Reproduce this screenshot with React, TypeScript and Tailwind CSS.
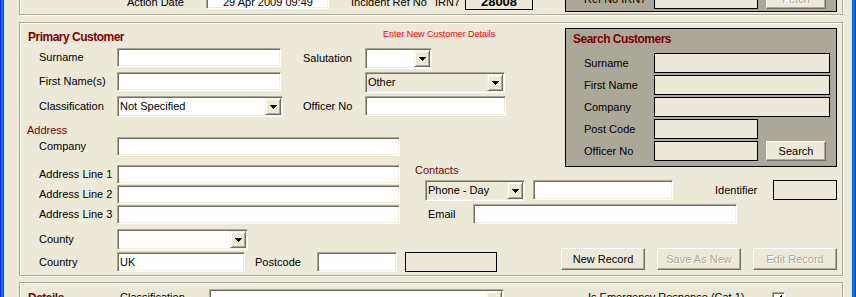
import React from "react";

const sunken =
  "border border-t-[#ACA899] border-l-[#ACA899] border-b-white border-r-white shadow-[inset_1px_1px_0_#716F64,inset_-1px_-1px_0_#F1EFE2]";
const raisedSmall =
  "border border-t-[#F1EFE2] border-l-[#F1EFE2] border-b-[#716F64] border-r-[#716F64] shadow-[inset_1px_1px_0_#fff,inset_-1px_-1px_0_#ACA899]";
const raisedBtn =
  "border border-t-white border-l-white border-b-[#716F64] border-r-[#716F64] shadow-[inset_-1px_-1px_0_#ACA899]";
const etched = "border border-[#ACA899] shadow-[inset_1px_1px_0_#fff,1px_1px_0_#fff]";
const disabledText = "text-[#ACA899] [text-shadow:1px_1px_0_#fff]";
const titleText = "font-bold text-[12px] leading-[14px] tracking-[-0.5px] text-[#800000]";

function Lbl({ className = "", children }: { className?: string; children?: React.ReactNode }) {
  return <div className={`flex items-center shrink-0 whitespace-nowrap ${className}`}>{children}</div>;
}

function TextBox({ className = "", children }: { className?: string; children?: React.ReactNode }) {
  return (
    <div className={`shrink-0 flex items-center pl-[2px] whitespace-nowrap bg-white ${sunken} ${className}`}>
      {children}
    </div>
  );
}

function Arrow() {
  return (
    <svg width="7" height="4" viewBox="0 0 7 4" shapeRendering="crispEdges">
      <path d="M0 0h7v1H0zM1 1h5v1H1zM2 2h3v1H2zM3 3h1v1H3z" fill="#000" />
    </svg>
  );
}

function Combo({ className = "", value, beige }: { className?: string; value?: string; beige?: boolean }) {
  return (
    <div className={`shrink-0 flex ${beige ? "bg-[#ECE9D8]" : "bg-white"} ${sunken} ${className}`}>
      <div className="flex-1 flex items-center pl-[2px] whitespace-nowrap overflow-hidden">{value}</div>
      <div className={`w-[16px] my-[1px] mr-[1px] flex items-center justify-center bg-[#ECE9D8] ${raisedSmall}`}>
        <Arrow />
      </div>
    </div>
  );
}

function Button({ className = "", children, disabled }: { className?: string; children: React.ReactNode; disabled?: boolean }) {
  return (
    <div
      className={`shrink-0 flex items-center justify-center bg-[#ECE9D8] whitespace-nowrap ${raisedBtn} ${
        disabled ? disabledText : "text-black"
      } ${className}`}
    >
      {children}
    </div>
  );
}

function BlackBox({ className = "" }: { className?: string }) {
  return <div className={`shrink-0 bg-[#ECE9D8] border border-black ${className}`} />;
}

function SearchRow({ label, wide, children }: { label: string; wide?: boolean; children?: React.ReactNode }) {
  return (
    <div className="flex items-start">
      <Lbl className="w-[88px] pl-[18px] h-[20px]">{label}</Lbl>
      {wide ? <BlackBox className="w-[176px] h-[20px]" /> : <BlackBox className="w-[104px] h-[20px]" />}
      {children}
    </div>
  );
}

export default function App() {
  return (
    <div className="w-[856px] h-[297px] overflow-hidden flex bg-[#ECE9D8] text-black text-[11px] leading-[13px] font-['Liberation_Sans',Arial,sans-serif]">
      <div className="w-[4px] shrink-0 bg-[linear-gradient(90deg,#0831d9_0%,#0831d9_25%,#166aee_25%,#166aee_75%,#0855dd_75%)]" />

      <div className="w-[848px] shrink-0 flex flex-col">
        {/* Top (partially visible) frame */}
        <div className={`ml-[15px] w-[824px] h-[45px] -mt-[30px] shrink-0 flex items-end ${etched}`}>
          <Lbl className="ml-[107px] w-[79px] mb-[5px]">Action Date</Lbl>
          <div className={`shrink-0 w-[123px] h-[20px] mb-[5px] bg-white pl-[16px] pt-[6px] whitespace-nowrap ${sunken}`}>
            29 Apr 2009 09:49
          </div>
          <Lbl className="w-[106px] pl-[22px] mb-[5px]">Incident Ref No</Lbl>
          <Lbl className="w-[30px] mb-[5px]">IRN7</Lbl>
          <div className="shrink-0 w-[68px] h-[22px] mb-[4px] border border-black flex items-end justify-center pb-[1px] font-bold text-[13px] leading-[13px]">
            28008
          </div>
          <div className="shrink-0 ml-[32px] w-[272px] h-[30px] mb-[2px] bg-[#ACA899] border border-black flex items-end pb-[2px]">
            <Lbl className="w-[88px] pl-[18px] mb-[3px]">Ref No IRN7</Lbl>
            <BlackBox className="w-[104px] h-[20px]" />
            <Button disabled className="ml-[8px] w-[60px] h-[20px]">
              Fetch
            </Button>
          </div>
        </div>

        {/* Primary Customer frame */}
        <div className={`mt-[7px] ml-[15px] w-[824px] h-[254px] shrink-0 flex flex-col ${etched}`}>
          {/* Band A */}
          <div className="flex items-start">
            <div className="w-[545px] shrink-0 flex flex-col">
              <div className="flex items-start mt-[6px] pl-[8px]">
                <div className={`w-[355px] shrink-0 mt-[1px] ${titleText}`}>Primary Customer</div>
                <div className="text-[9px] leading-[11px] tracking-[-0.05px] text-[#FF0000] whitespace-nowrap">
                  Enter New Customer Details
                </div>
              </div>
              <div className="flex items-start mt-[4px]">
                <Lbl className="w-[97px] pl-[19px] h-[19px]">Surname</Lbl>
                <TextBox className="w-[164px] h-[19px]" />
                <Lbl className="w-[84px] pl-[22px] h-[21px]">Salutation</Lbl>
                <Combo className="w-[67px] h-[21px]" />
              </div>
              <div className="flex items-start mt-[3px]">
                <Lbl className="w-[97px] pl-[19px] h-[19px]">First Name(s)</Lbl>
                <TextBox className="w-[164px] h-[19px]" />
                <div className="w-[84px] shrink-0" />
                <Combo beige className="w-[140px] h-[21px]" value="Other" />
              </div>
              <div className="flex items-start mt-[3px]">
                <Lbl className="w-[97px] pl-[19px] h-[21px]">Classification</Lbl>
                <Combo className="w-[166px] h-[21px]" value="Not Specified" />
                <Lbl className="w-[82px] pl-[20px] h-[20px]">Officer No</Lbl>
                <TextBox className="w-[141px] h-[20px]" />
              </div>
              <div className="mt-[7px] pl-[7px] text-[#800000]">Address</div>
              <div className="flex items-start">
                <Lbl className="w-[97px] pl-[19px] h-[19px]">Company</Lbl>
                <TextBox className="w-[283px] h-[19px]" />
              </div>
            </div>

            {/* Search Customers */}
            <div className="mt-[5px] -mb-[11px] w-[272px] h-[139px] shrink-0 bg-[#ACA899] border border-black flex flex-col gap-[2px]">
              <div className={`mt-[3px] mb-[5px] pl-[7px] ${titleText}`}>Search Customers</div>
              <SearchRow label="Surname" wide />
              <SearchRow label="First Name" wide />
              <SearchRow label="Company" wide />
              <SearchRow label="Post Code" />
              <SearchRow label="Officer No">
                <Button className="ml-[8px] w-[60px] h-[20px]">Search</Button>
              </SearchRow>
            </div>
          </div>

          {/* Band B */}
          <div className="flex items-start">
            <div className="w-[380px] shrink-0 flex flex-col mt-[9px] gap-[1px]">
              <div className="flex items-start">
                <Lbl className="w-[97px] pl-[19px] h-[19px]">Address Line 1</Lbl>
                <TextBox className="w-[283px] h-[19px]" />
              </div>
              <div className="flex items-start">
                <Lbl className="w-[97px] pl-[19px] h-[19px]">Address Line 2</Lbl>
                <TextBox className="w-[283px] h-[19px]" />
              </div>
              <div className="flex items-start">
                <Lbl className="w-[97px] pl-[19px] h-[19px]">Address Line 3</Lbl>
                <TextBox className="w-[283px] h-[19px]" />
              </div>
            </div>
            <div className="ml-[15px] flex flex-col">
              <div className="mt-[8px] text-[#800000]">Contacts</div>
              <div className="flex items-start mt-[3px] ml-[10px]">
                <Combo beige className="w-[100px] h-[21px]" value="Phone - Day" />
                <TextBox className="ml-[8px] w-[140px] h-[20px]" />
                <Lbl className="ml-[42px] w-[58px] h-[20px]">Identifier</Lbl>
                <BlackBox className="w-[64px] h-[20px]" />
              </div>
              <div className="flex items-start mt-[3px] ml-[13px]">
                <Lbl className="w-[45px] h-[20px]">Email</Lbl>
                <TextBox className="w-[264px] h-[20px]" />
              </div>
            </div>
          </div>

          {/* Band C */}
          <div className="flex items-start">
            <div className="flex flex-col shrink-0">
              <div className="flex items-start mt-[5px]">
                <Lbl className="w-[97px] pl-[19px] h-[21px]">County</Lbl>
                <Combo className="w-[131px] h-[21px]" />
              </div>
              <div className="flex items-start mt-[2px]">
                <Lbl className="w-[97px] pl-[19px] h-[20px]">Country</Lbl>
                <TextBox className="w-[128px] h-[20px]">UK</TextBox>
                <Lbl className="w-[72px] pl-[10px] h-[20px]">Postcode</Lbl>
                <TextBox className="w-[80px] h-[20px]" />
                <BlackBox className="ml-[8px] w-[92px] h-[20px]" />
              </div>
            </div>
            <div className="flex ml-[64px] mt-[24px] gap-[12px]">
              <Button className="w-[84px] h-[22px]">New Record</Button>
              <Button disabled className="w-[84px] h-[22px]">
                Save As New
              </Button>
              <Button disabled className="w-[84px] h-[22px]">
                Edit Record
              </Button>
            </div>
          </div>
        </div>

        {/* Details frame (partially visible) */}
        <div className={`mt-[6px] ml-[15px] w-[824px] h-[40px] shrink-0 flex flex-col ${etched}`}>
          <div className="flex items-start mt-[6px] pl-[8px]">
            <div className={`w-[92px] shrink-0 mt-[2px] ${titleText}`}>Details</div>
            <div className="w-[89px] shrink-0 mt-[2px] whitespace-nowrap">Classification</div>
            <Combo className="w-[295px] h-[21px]" />
            <div className="ml-[84px] w-[184px] shrink-0 mt-[2px] whitespace-nowrap">Is Emergency Response (Cat 1)</div>
            <div className={`mt-[3px] w-[13px] h-[13px] shrink-0 bg-white flex items-center justify-center ${sunken}`}>
              <svg width="7" height="7" viewBox="0 0 7 7" shapeRendering="crispEdges">
                <path d="M6 0h1v2H6zM5 1h1v2H5zM4 2h1v2H4zM3 3h1v2H3zM2 4h1v2H2zM1 3h1v2H1zM0 2h1v2H0z" fill="#000" />
              </svg>
            </div>
          </div>
        </div>
      </div>

      <div className="w-[4px] shrink-0 bg-[linear-gradient(90deg,#0855dd_0%,#166aee_25%,#166aee_75%,#0831d9_75%)]" />
    </div>
  );
}
